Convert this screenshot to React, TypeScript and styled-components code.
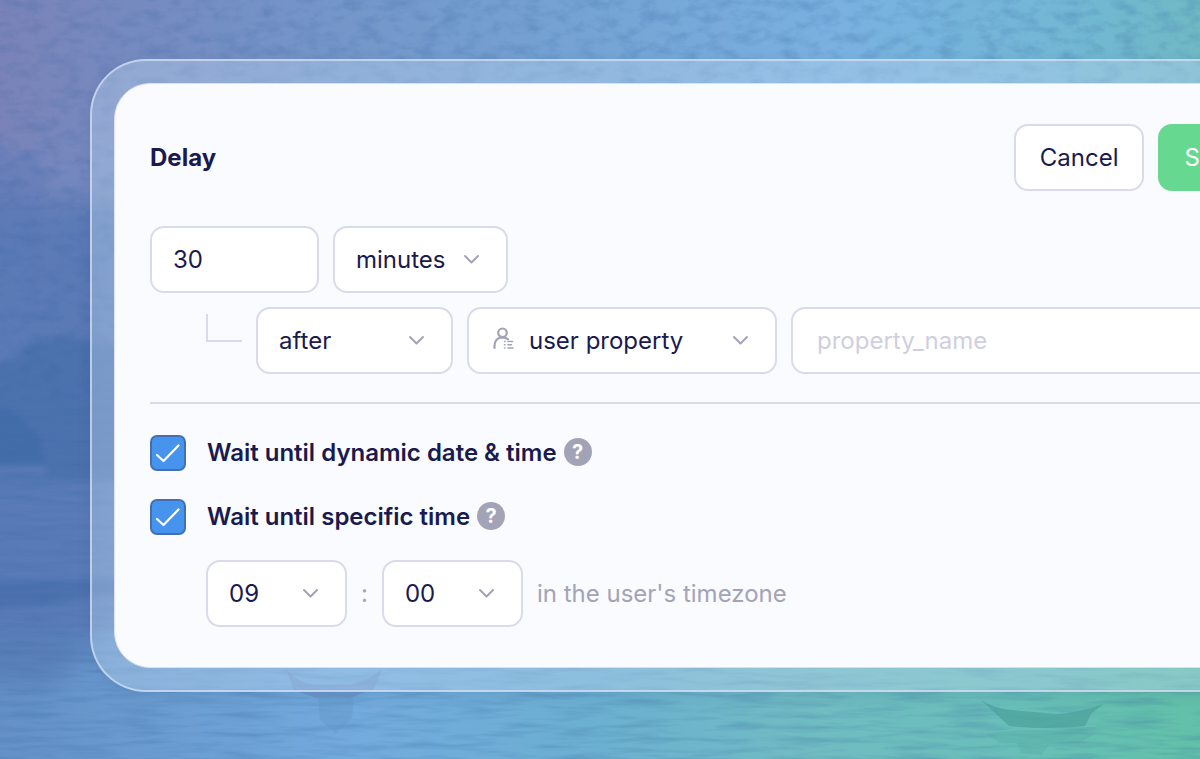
import React, { useState } from "react";
import styled, { createGlobalStyle } from "styled-components";

const Global = createGlobalStyle`
  *, *::before, *::after { box-sizing: border-box; }
  html, body, #root { height: 100%; }
  body { margin: 0; }
  body, button, input, select {
    font-family: Inter, "Liberation Sans", sans-serif;
    font-size: 24px;
    line-height: 32px;
    color: #1a1a4e;
  }
`;

const Page = styled.main`
  position: relative;
  min-height: 100%;
  overflow: hidden;
  padding: 59px 0 67px 90px;
`;

const Backdrop = styled.svg`
  position: absolute;
  inset: 0;
  width: 100%;
  height: 100%;
`;

const Frame = styled.div`
  position: relative;
  margin-right: -126px;
  padding: 22px;
  border: 2px solid rgba(218, 226, 245, 0.7);
  border-radius: 56px;
  background: rgba(190, 214, 240, 0.4);
  box-shadow: 0 4px 14px rgba(30, 60, 120, 0.12);
`;

const Card = styled.form`
  display: flex;
  flex-direction: column;
  padding: 40px 35px;
  border: 1px solid #dcdff0;
  border-radius: 36px;
  background: #fafbfe;
`;

const Header = styled.header`
  display: flex;
  align-items: center;
  gap: 14px;
`;

const Title = styled.h1`
  flex: 1;
  margin: 0;
  font-size: 24px;
  font-weight: 700;
  line-height: 32px;
`;

const Button = styled.button<{ $primary?: boolean }>`
  height: 67px;
  padding: 0 24px;
  border: 2px solid ${(p) => (p.$primary ? "#67d890" : "#dadaed")};
  border-radius: 14px;
  background: ${(p) => (p.$primary ? "#67d890" : "#ffffff")};
  color: ${(p) => (p.$primary ? "#ffffff" : "#1a1a4e")};
`;

const Row = styled.div<{ $indent?: number; $top: number }>`
  display: flex;
  align-items: center;
  gap: 14px;
  margin-top: ${(p) => p.$top}px;
  padding-left: ${(p) => p.$indent || 0}px;
`;

const TextField = styled.input<{ $width?: number }>`
  flex: ${(p) => (p.$width ? `0 0 ${p.$width}px` : "1")};
  min-width: 0;
  height: 67px;
  padding: 0 ${(p) => (p.$width ? 21 : 24)}px;
  border: 2px solid #dadaed;
  border-radius: 14px;
  background: #ffffff;
  &::placeholder { color: #cfcfe0; opacity: 1; }
`;

const SelectBox = styled.div<{ $width: number }>`
  position: relative;
  flex: 0 0 ${(p) => p.$width}px;
  height: 67px;
`;

const NativeSelect = styled.select<{ $icon?: boolean }>`
  appearance: none;
  width: 100%;
  height: 100%;
  padding: 0 48px 0 ${(p) => (p.$icon ? 60 : 21)}px;
  border: 2px solid #dadaed;
  border-radius: 14px;
  background: #ffffff;
`;

const Chevron = styled.svg`
  position: absolute;
  right: 28px;
  top: 28px;
  pointer-events: none;
`;

const LeadIcon = styled.svg`
  position: absolute;
  left: 25px;
  top: 20px;
  pointer-events: none;
`;

const Elbow = styled.span`
  width: 36px;
  height: 28px;
  margin-bottom: 26px;
  border: solid #dadaed;
  border-width: 0 0 2px 2px;
`;

const Divider = styled.hr`
  width: 100%;
  height: 2px;
  margin: 28px 0 31px;
  border: 0;
  background: #dadaed;
`;

const CheckRow = styled.div`
  display: flex;
  align-items: center;
  height: 36px;
  margin-bottom: 28px;
`;

const Tick = styled.input`
  appearance: none;
  width: 36px;
  height: 36px;
  margin: 0 21px 0 0;
  border: 2px solid #4370ae;
  border-radius: 7px;
  background: #ffffff;
  &:checked {
    background: #4794ef
      url("data:image/svg+xml,%3Csvg xmlns='http://www.w3.org/2000/svg' viewBox='0 0 32 32' fill='none' stroke='white' stroke-width='2.2' stroke-linecap='round' stroke-linejoin='round'%3E%3Cpath d='M5 18l6.500 6L26.500 8.500'/%3E%3C/svg%3E")
      center / 32px 32px no-repeat;
  }
`;

const CheckLabel = styled.label`
  font-weight: 600;
`;

const Help = styled.button`
  width: 28px;
  height: 28px;
  margin: 0 0 2px 7px;
  padding: 0;
  border: 0;
  border-radius: 50%;
  background: #a3a3b8;
  color: #ffffff;
  font-size: 20px;
  font-weight: 700;
  line-height: 28px;
`;

const Hint = styled.span`
  color: #a3a3b8;
`;

type SelectProps = {
  label: string;
  width: number;
  options: string[];
  icon?: React.ReactNode;
};

function Select({ label, width, options, icon }: SelectProps) {
  return (
    <SelectBox $width={width}>
      <NativeSelect aria-label={label} $icon={!!icon}>
        {options.map((o) => (
          <option key={o}>{o}</option>
        ))}
      </NativeSelect>
      {icon}
      <Chevron width="17" height="12" viewBox="0 0 17 12" fill="none" stroke="#a3a3b8" strokeWidth="2" strokeLinecap="round" strokeLinejoin="round" aria-hidden="true">
        <path d="M2 2l6.500 6.500L15 2" />
      </Chevron>
    </SelectBox>
  );
}

function UserPropertyIcon() {
  return (
    <LeadIcon width="24" height="24" viewBox="0 0 24 24" fill="none" stroke="#a3a3b8" strokeWidth="2.2" strokeLinecap="round" aria-hidden="true">
      <circle cx="10.500" cy="5.800" r="4.300" />
      <path d="M2.500 21v-2c0-5 3-8.500 8-8.700 2.300 0 4.200.8 5.500 2" />
      <path d="M12.500 14.500h.5M12.500 17.800h.5M12.500 21h.5M16 14.500h4.500M16 17.800h3.500M16 21h5" strokeWidth="1.600" />
    </LeadIcon>
  );
}

function Scenery() {
  return (
    <Backdrop viewBox="0 0 1200 759" preserveAspectRatio="xMidYMid slice" aria-hidden="true">
      <defs>
        <linearGradient id="sky" x1="0" y1="0" x2="1" y2="0">
          <stop offset="0" stopColor="#7a83b9" />
          <stop offset="0.12" stopColor="#758bc0" />
          <stop offset="0.42" stopColor="#749fd0" />
          <stop offset="0.7" stopColor="#79b1e0" />
          <stop offset="0.88" stopColor="#73b7d5" />
          <stop offset="1" stopColor="#6fb9c5" />
        </linearGradient>
        <linearGradient id="water" x1="0" y1="0" x2="1" y2="0">
          <stop offset="0" stopColor="#6490c6" />
          <stop offset="0.3" stopColor="#73abdd" />
          <stop offset="0.48" stopColor="#6cafd2" />
          <stop offset="0.68" stopColor="#70bcc2" />
          <stop offset="0.84" stopColor="#69bfb9" />
          <stop offset="1" stopColor="#62c1a8" />
        </linearGradient>
        <linearGradient id="fade" x1="0" y1="0" x2="0" y2="1">
          <stop offset="0.15" stopColor="#fff" stopOpacity="0" />
          <stop offset="0.85" stopColor="#fff" />
        </linearGradient>
        <mask id="lower"><rect width="1200" height="759" fill="url(#fade)" /></mask>
        <filter id="soft" x="-20%" y="-20%" width="140%" height="140%"><feGaussianBlur stdDeviation="3" /></filter>
        <filter id="haze" x="-20%" y="-20%" width="140%" height="140%"><feGaussianBlur stdDeviation="14" /></filter>
        <filter id="paint" x="0" y="0" width="100%" height="100%" colorInterpolationFilters="sRGB">
          <feTurbulence type="fractalNoise" baseFrequency="0.05 0.09" numOctaves="4" seed="8" />
          <feColorMatrix values="0 0 0 0 0.2  0 0 0 0 0.38  0 0 0 0 0.62  2 0 0 0 -0.85" />
        </filter>
        <filter id="ripple" x="0" y="0" width="100%" height="100%" colorInterpolationFilters="sRGB">
          <feTurbulence type="fractalNoise" baseFrequency="0.018 0.16" numOctaves="3" seed="21" />
          <feColorMatrix values="0 0 0 0 0.22  0 0 0 0 0.42  0 0 0 0 0.62  2 0 0 0 -0.85" />
        </filter>
      </defs>
      <rect width="1200" height="759" fill="url(#sky)" />
      <rect width="1200" height="759" fill="url(#water)" mask="url(#lower)" />
      <path d="M-40 200h160v420l-60 60h-100z" fill="#5577b3" opacity="0.75" filter="url(#haze)" />
      <g filter="url(#soft)">
        <path d="M-20 138l28 8 4 8 26-4 4 26v130l16-60 14-30 60-6v420H-20z" fill="#5b78b6" opacity="0.4" />
        <path d="M-20 372l40-18 12-14 26-4 32 4 40 10v130H-20z" fill="#456ea9" opacity="0.65" />
        <path d="M-20 410l30-2 28 26 8 30-66 8z" fill="#3e69a4" opacity="0.55" />
        <path d="M-20 466h66v9H-20z" fill="#637fbc" opacity="0.7" />
        <path d="M-20 580h150v12l-90 14-60 4z" fill="#3f68a6" opacity="0.5" />
      </g>
      <rect width="1200" height="400" filter="url(#paint)" opacity="0.26" />
      <rect y="400" width="1200" height="359" filter="url(#ripple)" opacity="0.3" />
      <path d="M286 669q10 13 28 16h36q20-5 32-16l-8 20-24 9h-34l-22-8z" fill="#6483b8" opacity="0.45" />
      <path d="M318 698h36l-2 20-16 16-16-14z" fill="#5d90c0" opacity="0.3" />
      <path d="M981 700q12 8 30 10l46 4q26-2 46-10l-12 10-6 12q-38 4-76 0z" fill="#4c9f9b" opacity="0.7" />
      <path d="M985 734q50-8 110 0l-14 8-32 3-8 10-20-2-4-10-18-1z" fill="#4c9f9b" opacity="0.25" />
    </Backdrop>
  );
}

export default function App() {
  const [dynamicDate, setDynamicDate] = useState(true);
  const [specificTime, setSpecificTime] = useState(true);
  return (
    <Page>
      <Global />
      <Scenery />
      <Frame>
        <Card onSubmit={(e) => e.preventDefault()}>
          <Header>
            <Title>Delay</Title>
            <Button type="button">Cancel</Button>
            <Button type="submit" $primary>Save</Button>
          </Header>
          <Row $top={35}>
            <TextField $width={169} aria-label="Delay amount" defaultValue="30" />
            <Select label="Delay unit" width={175} options={["minutes", "hours", "days"]} />
          </Row>
          <Row $top={14} $indent={56}>
            <Elbow />
            <Select label="Relation" width={197} options={["after", "before"]} />
            <Select label="Property source" width={310} options={["user property", "event property"]} icon={<UserPropertyIcon />} />
            <TextField aria-label="Property name" placeholder="property_name" />
          </Row>
          <Divider />
          <CheckRow>
            <Tick id="dynamic-date" type="checkbox" checked={dynamicDate} onChange={(e) => setDynamicDate(e.target.checked)} />
            <CheckLabel htmlFor="dynamic-date">Wait until dynamic date &amp; time</CheckLabel>
            <Help type="button" aria-label="About dynamic date and time">?</Help>
          </CheckRow>
          <CheckRow>
            <Tick id="specific-time" type="checkbox" checked={specificTime} onChange={(e) => setSpecificTime(e.target.checked)} />
            <CheckLabel htmlFor="specific-time">Wait until specific time</CheckLabel>
            <Help type="button" aria-label="About specific time">?</Help>
          </CheckRow>
          <Row $top={-3} $indent={56}>
            <Select label="Hour" width={141} options={["09", "10", "11"]} />
            <Hint>:</Hint>
            <Select label="Minute" width={141} options={["00", "15", "30", "45"]} />
            <Hint>in the user's timezone</Hint>
          </Row>
        </Card>
      </Frame>
    </Page>
  );
}
